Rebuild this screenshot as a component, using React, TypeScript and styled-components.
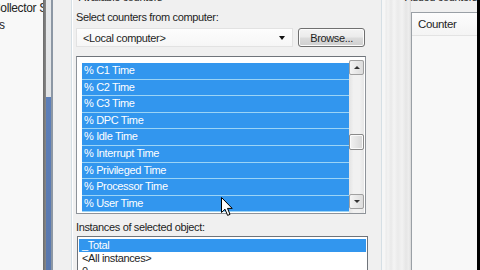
import React from "react";
import styled, { createGlobalStyle } from "styled-components";

const GlobalStyle = createGlobalStyle`
  html, body {
    margin: 0;
    padding: 0;
    background: #000;
  }
  body {
    font-family: "Liberation Sans", Arial, sans-serif;
    font-size: 11px;
    letter-spacing: -0.35px;
    color: #1e1e1e;
  }
`;

const Screen = styled.div`
  width: 480px;
  height: 270px;
  overflow: hidden;
  display: flex;
  background: #f0f0f0;
`;

const BackWindow = styled.div`
  width: 43px;
  flex: none;
  background: #f8f8f8;
  overflow: hidden;
  font-size: 12px;
  padding-top: 1px;
`;

const BackLine = styled.div<{ $shift: number }>`
  white-space: nowrap;
  height: 17px;
  line-height: 15px;
  margin-left: ${(p) => p.$shift}px;
  color: #222;
`;

const Frame = styled.div`
  width: 10px;
  flex: none;
  display: flex;
`;

const FrameEdge = styled.div`
  width: 3px;
  background: linear-gradient(90deg, #6a6a6a, #8a8a8a);
`;

const FrameGlass = styled.div`
  width: 5px;
  background: linear-gradient(180deg, #e6e8ea 0, #e2e4e6 97px, #5d7fb9 97px, #5a78ad 100%);
`;

const FrameInner = styled.div`
  width: 2px;
  background: #8c97a4;
`;

const Dialog = styled.div`
  flex: 1;
  display: flex;
  padding-left: 18px;
  background: #f0f0f0;
`;

const GroupBox = styled.div`
  width: 305px;
  flex: none;
  border-left: 1px solid #d5dfe5;
  border-right: 1px solid #d5dfe5;
  box-shadow: inset 1px 0 0 #fff;
  padding: 0 0 0 4px;
  display: flex;
  flex-direction: column;
`;

const GroupTitle = styled.div`
  height: 3px;
  line-height: 3px;
  position: relative;
  top: -4px;
  white-space: nowrap;
`;

const Label = styled.div<{ $top: number }>`
  margin-top: ${(p) => p.$top}px;
  height: 14px;
  line-height: 14px;
`;

const ComboRow = styled.div`
  margin-top: 4px;
  display: flex;
  gap: 5px;
  height: 19px;
  flex: none;
`;

const Combo = styled.div`
  width: 217px;
  box-sizing: border-box;
  border: 1px solid #e2e2e2;
  background: linear-gradient(180deg, #fdfdfd, #f6f6f6);
  display: flex;
  align-items: center;
  padding: 0 6px;
  justify-content: space-between;
`;

const ComboArrow = styled.div`
  width: 0;
  height: 0;
  border-left: 3px solid transparent;
  border-right: 3px solid transparent;
  border-top: 4px solid #111;
  margin-right: 1px;
`;

const Button = styled.div`
  width: 67px;
  box-sizing: border-box;
  border: 1px solid #707070;
  border-radius: 3px;
  background: linear-gradient(180deg, #f4f4f4 0%, #ebebeb 48%, #dcdcdc 52%, #cfcfcf 100%);
  box-shadow: inset 0 0 0 1px #fcfcfc;
  display: flex;
  align-items: center;
  justify-content: center;
`;

const ListBox = styled.div`
  margin-top: 9px;
  width: 290px;
  height: 158px;
  flex: none;
  box-sizing: border-box;
  border: 1px solid #8e9399;
  border-top-color: #6f747a;
  background: #fff;
  padding: 3px 1px 0 5px;
  display: flex;
`;

const Rows = styled.div`
  flex: 1;
  display: flex;
  flex-direction: column;
  padding-top: 3px;
`;

const Row = styled.div<{ $selected?: boolean }>`
  height: 15.62px;
  flex: none;
  line-height: 15px;
  padding-left: 2px;
  color: ${(p) => (p.$selected ? "#fff" : "#1e1e1e")};
  background: ${(p) => (p.$selected ? "#3296ee" : "transparent")};
  border-bottom: 1px solid ${(p) => (p.$selected ? "#9bd4f6" : "transparent")};
  white-space: nowrap;
`;

const ScrollBar = styled.div`
  width: 15px;
  flex: none;
  display: flex;
  flex-direction: column;
  background: linear-gradient(90deg, #e3e3e3, #f1f1f1 30%, #f1f1f1 70%, #e6e6e6);
`;

const ScrollButton = styled.div<{ $down?: boolean }>`
  height: 15px;
  box-sizing: border-box;
  border: 1px solid #a0a0a0;
  border-radius: 2px;
  background: linear-gradient(90deg, #f4f4f4, #dcdcdc);
  display: flex;
  align-items: center;
  justify-content: center;
  margin-top: ${(p) => (p.$down ? "auto" : "0")};
  margin-bottom: ${(p) => (p.$down ? "4px" : "0")};
`;

const Triangle = styled.div<{ $down?: boolean }>`
  width: 0;
  height: 0;
  border-left: 3px solid transparent;
  border-right: 3px solid transparent;
  ${(p) => (p.$down ? "border-top: 3px solid #333;" : "border-bottom: 3px solid #333;")}
`;

const Thumb = styled.div`
  margin-top: 59px;
  height: 16px;
  box-sizing: border-box;
  border: 1px solid #8a8a8a;
  border-radius: 2px;
  background: linear-gradient(90deg, #f2f2f2, #d6d6d6);
  box-shadow: inset 0 0 0 1px #fafafa;
`;

const InstanceBox = styled.div`
  margin-top: 2px;
  margin-left: 1px;
  width: 291px;
  flex: 1;
  box-sizing: border-box;
  border: 1px solid #6f747a;
  border-bottom: none;
  background: #fff;
  padding: 2px 1px 0 1px;
  display: flex;
  flex-direction: column;
`;

const InstanceRow = styled.div<{ $selected?: boolean }>`
  height: 13px;
  line-height: 13px;
  padding-left: 3px;
  flex: none;
  color: ${(p) => (p.$selected ? "#fff" : "#1e1e1e")};
  background: ${(p) => (p.$selected ? "#3296ee" : "transparent")};
`;

const Splitter = styled.div`
  width: 29px;
  flex: none;
  background: linear-gradient(
    90deg,
    #f6f6f6 0,
    #f6f6f6 3px,
    #ebebeb 4px,
    #f3f3f3 6px,
    #e9e9e9 9px,
    #f4f4f4 12px,
    #eaeaea 16px,
    #f2f2f2 20px,
    #e6e6e6 24px,
    #eeeeee 27px,
    #d8d8d8 29px
  );
`;

const AddedGroup = styled.div`
  flex: 1;
  display: flex;
  flex-direction: column;
  background: #f0f0f0;
`;

const AddedTitle = styled.div`
  height: 12px;
  line-height: 3px;
  position: relative;
  top: -4px;
  margin-left: -6px;
  white-space: nowrap;
`;

const AddedList = styled.div`
  flex: 1;
  border-left: 1px solid #9aa0a6;
  border-top: 1px solid #9aa0a6;
  background: #f8f8f8;
  display: flex;
  flex-direction: column;
`;

const Header = styled.div`
  height: 22px;
  line-height: 22px;
  padding-left: 6px;
  background: linear-gradient(180deg, #fdfdfd, #f4f4f4);
  border-bottom: 1px solid #e3e3e3;
  font-size: 11.5px;
`;

const BlackEdge = styled.div`
  width: 3px;
  flex: none;
  background: #000;
`;

const Cursor = styled.svg`
  position: absolute;
  left: 221px;
  top: 197px;
`;

const counters = [
  "% C1 Time",
  "% C2 Time",
  "% C3 Time",
  "% DPC Time",
  "% Idle Time",
  "% Interrupt Time",
  "% Privileged Time",
  "% Processor Time",
  "% User Time",
];

export default function App() {
  return (
    <>
      <GlobalStyle />
      <Screen>
        <BackWindow>
          <BackLine $shift={-8}>Collector Sets</BackLine>
          <BackLine $shift={-4}>ts</BackLine>
        </BackWindow>
        <Frame>
          <FrameEdge />
          <FrameGlass />
          <FrameInner />
        </Frame>
        <Dialog>
          <GroupBox>
            <GroupTitle>&nbsp;Available counters</GroupTitle>
            <Label $top={7}>Select counters from computer:</Label>
            <ComboRow>
              <Combo>
                <span>&lt;Local computer&gt;</span>
                <ComboArrow />
              </Combo>
              <Button>Browse...</Button>
            </ComboRow>
            <ListBox>
              <Rows>
                {counters.map((c) => (
                  <Row key={c} $selected>
                    {c}
                  </Row>
                ))}
              </Rows>
              <ScrollBar>
                <ScrollButton>
                  <Triangle />
                </ScrollButton>
                <Thumb />
                <ScrollButton $down>
                  <Triangle $down />
                </ScrollButton>
              </ScrollBar>
            </ListBox>
            <Label $top={6}>Instances of selected object:</Label>
            <InstanceBox>
              <InstanceRow $selected>_Total</InstanceRow>
              <InstanceRow>&lt;All instances&gt;</InstanceRow>
              <InstanceRow>0</InstanceRow>
            </InstanceBox>
          </GroupBox>
          <Splitter />
          <AddedGroup>
            <AddedTitle>Added counters</AddedTitle>
            <AddedList>
              <Header>Counter</Header>
            </AddedList>
          </AddedGroup>
          <BlackEdge />
        </Dialog>
      </Screen>
      <Cursor width="13" height="20" viewBox="0 0 13 20">
        <path
          d="M0.5 0.5 L0.5 15.5 L4 12.2 L6.6 18.4 L9 17.4 L6.5 11.4 L11.2 11.4 Z"
          fill="#fff"
          stroke="#000"
          strokeWidth="1"
          strokeLinejoin="round"
        />
      </Cursor>
    </>
  );
}
